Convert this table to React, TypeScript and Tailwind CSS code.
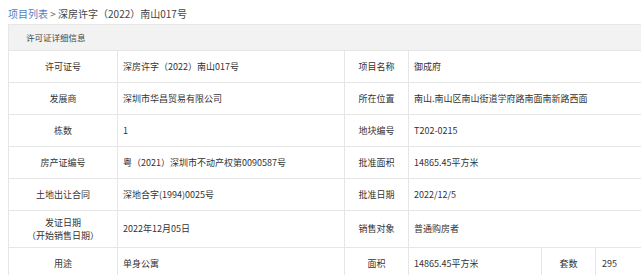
const rows: { label: string[]; value: string; label2: string; value2: string }[] = [
  { label: ['许可证号'], value: '深房许字（2022）南山017号', label2: '项目名称', value2: '御成府' },
  { label: ['发展商'], value: '深圳市华昌贸易有限公司', label2: '所在位置', value2: '南山.南山区南山街道学府路南面南新路西面' },
  { label: ['栋数'], value: '1', label2: '地块编号', value2: 'T202-0215' },
  { label: ['房产证编号'], value: '粤（2021）深圳市不动产权第0090587号', label2: '批准面积', value2: '14865.45平方米' },
  { label: ['土地出让合同'], value: '深地合字(1994)0025号', label2: '批准日期', value2: '2022/12/5' },
  { label: ['发证日期', '（开始销售日期）'], value: '2022年12月05日', label2: '销售对象', value2: '普通购房者' },
];

const cell = 'border border-[#e6e6e6] align-middle';

export default function App() {
  return (
    <div
      className="w-[641px] h-[275px] overflow-hidden bg-white text-[9px] text-[#333]"
      style={{ fontFamily: '"Noto Sans CJK SC", "Noto Sans", sans-serif' }}
    >
      <div className="h-[24px] pl-2 pt-[6px] text-[10px] leading-[16px]">
        <span className="text-[#5580bd]">项目列表</span>
        <span className="text-[#666]"> &gt; </span>
        <span className="text-[#444]">深房许字（2022）南山017号</span>
      </div>
      <div className="pl-2">
        <table className="w-[660px] border-collapse table-fixed">
          <colgroup>
            <col className="w-[109px]" />
            <col className="w-[227px]" />
            <col className="w-[64px]" />
            <col className="w-[133px]" />
            <col className="w-[54px]" />
            <col />
          </colgroup>
          <tbody>
            <tr className="h-[26px] bg-[#f2f2f2]">
              <td colSpan={6} className={`${cell} pl-[17px] text-[8.5px] text-[#444]`}>
                许可证详细信息
              </td>
            </tr>
            {rows.map((r) => (
              <tr key={r.label.join('')} className={r.label.length > 1 ? 'h-[37px]' : 'h-[32px]'}>
                <td className={`${cell} text-center leading-[13px]`}>
                  {r.label.map((l) => (
                    <div key={l}>{l}</div>
                  ))}
                </td>
                <td className={`${cell} pl-[5px]`}>{r.value}</td>
                <td className={`${cell} text-center`}>{r.label2}</td>
                <td colSpan={3} className={`${cell} pl-[5px]`}>{r.value2}</td>
              </tr>
            ))}
            <tr className="h-[32px]">
              <td className={`${cell} text-center`}>用途</td>
              <td className={`${cell} pl-[5px]`}>单身公寓</td>
              <td className={`${cell} text-center`}>面积</td>
              <td className={`${cell} pl-[5px]`}>14865.45平方米</td>
              <td className={`${cell} text-center`}>套数</td>
              <td className={`${cell} pl-[6px]`}>295</td>
            </tr>
          </tbody>
        </table>
      </div>
    </div>
  );
}
